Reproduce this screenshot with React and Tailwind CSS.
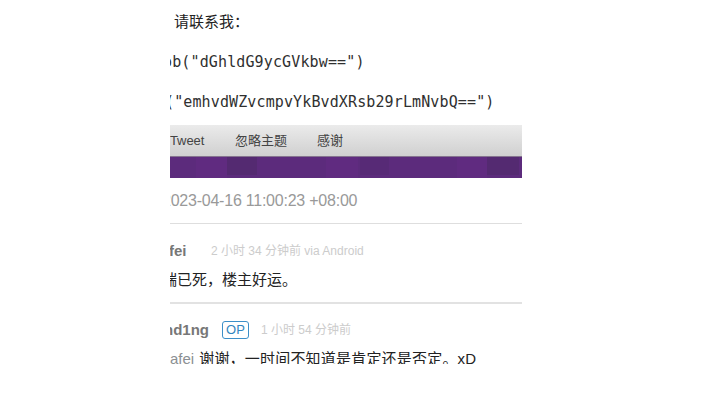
const sans = "font-['Liberation_Sans','Noto_Sans_CJK_SC',sans-serif]";
const mono = "font-['DejaVu_Sans_Mono','Noto_Sans_CJK_SC',monospace]";

function CodeLine({ children, className }) {
  return (
    <p className={`${mono} flex h-10 items-center whitespace-pre text-[15px] text-[#303030] ${className}`}>
      {children}
    </p>
  );
}

export default function App() {
  return (
    <div className="flex h-[405px] w-[720px] items-start justify-center bg-white pr-[28px]">
      <main className={`${sans} flex h-[364px] w-[352px] flex-col overflow-hidden whitespace-nowrap text-[#222]`}>
        <section className="h-[125px] shrink-0">
          <p className="flex h-[42px] items-center pl-1 text-[15px] leading-none">请联系我：</p>
          <CodeLine className="-ml-[7px] tracking-[0.13px]">{'ob("dGhldG9ycGVkbw==")'}</CodeLine>
          <CodeLine className="-ml-[5px] tracking-[0.12px]">{'("emhvdWZvcmpvYkBvdXRsb29rLmNvbQ==")'}</CodeLine>
        </section>

        <nav className="flex h-8 shrink-0 items-center border-b border-[#85748f] bg-linear-to-b from-[#ebebeb] to-[#d0d0d0] pt-px text-[13px] text-[#444]">
          <span className="w-[65px] tracking-[-0.1px]">Tweet</span>
          <span className="w-[82px]">忽略主题</span>
          <span>感谢</span>
        </nav>
        <div className="flex h-[21px] shrink-0 bg-[#5c2b7c]">
          <i className="ml-[26px] w-[31px] bg-[#602b80]" />
          <i className="mb-[3px] w-[30px] bg-[#542a71]" />
          <i className="ml-[69px] w-[32px] bg-[#602b80]" />
          <i className="mb-[3px] ml-[2px] w-[29px] bg-[#572a76]" />
          <i className="ml-[68px] w-[30px] bg-[#602b80]" />
          <i className="mb-[3px] w-[32px] bg-[#542a71]" />
        </div>

        <div className="flex h-[46px] shrink-0 items-center border-b border-[#dedede] pt-px text-[16px] text-[#999]">
          <span className="-ml-[8px] tracking-[-0.23px]">2023-04-16 11:00:23 +08:00</span>
        </div>

        <article className="h-[80px] shrink-0 border-b-2 border-[#e2e2e2] pt-[17px]">
          <header className="flex h-5 items-center">
            <b className="-ml-px w-[42px] text-[15px] text-[#777]">fei</b>
            <span className="text-[12px] text-[#ccc]">2 小时 34 分钟前 via Android</span>
          </header>
          <p className="-ml-[8px] flex h-5 items-center pt-[17px] text-[15px] leading-none">端已死，楼主好运。</p>
        </article>

        <article className="pt-[16px]">
          <header className="flex h-5 items-center">
            <b className="-ml-[6px] w-[58px] text-[15px] text-[#777]">nd1ng</b>
            <span className="flex h-[18px] w-[27px] items-center justify-center rounded-[3px] border border-[#3c8fc8] text-[13px] text-[#3286c0]">OP</span>
            <span className="ml-[12px] text-[12px] text-[#ccc]">1 小时 54 分钟前</span>
          </header>
          <p className="flex h-5 items-center pt-[17px] text-[15px] leading-none">
            <span className="mr-[5px] text-[#8b8f93]">afei</span>
            <span className="tracking-[0.2px]">谢谢，一时间不知道是肯定还是否定。xD</span>
          </p>
        </article>
      </main>
    </div>
  );
}
